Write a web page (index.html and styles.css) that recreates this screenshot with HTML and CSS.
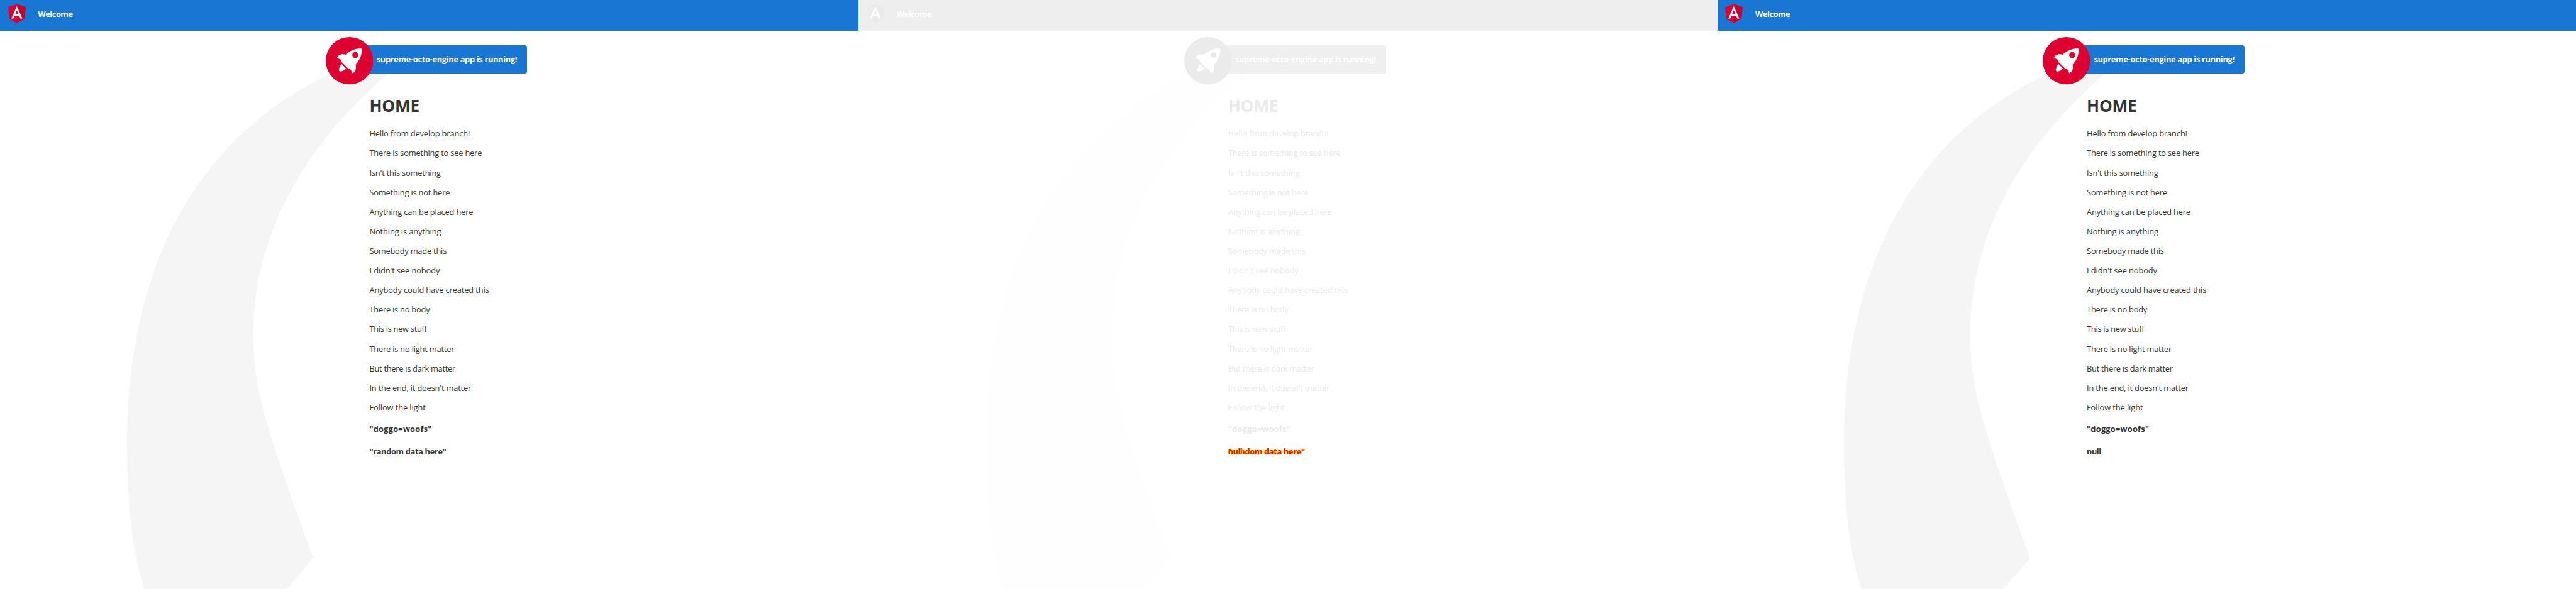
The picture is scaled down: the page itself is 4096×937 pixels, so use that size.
FILE: index.html
```html
<!DOCTYPE html>
<html lang="en">
<head>
<meta charset="utf-8">
<title>Welcome</title>
<link rel="stylesheet" href="styles.css">
</head>
<body>
<svg class="defs" aria-hidden="true">
  <symbol id="logo" viewBox="0 0 250 250">
    <polygon class="shield" points="125,30 31.9,63.2 46.1,186.3 125,230 203.9,186.3 218.1,63.2"/>
    <polygon class="shade" points="125,30 125,230 203.9,186.3 218.1,63.2"/>
    <path class="mark" d="M125,52.1L66.8,182.6h21.7l11.7-29.2h49.4l11.7,29.2h21.7L125,52.1z M142,135.4H108l17-40.9L142,135.4z"/>
  </symbol>
  <symbol id="rocket" viewBox="0 0 101.678 101.678">
    <circle class="disc" cx="50.839" cy="50.839" r="50.839"/>
    <g transform="translate(24.185 24.185)" fill="#fff">
      <path d="M3.4,42.615a3.084,3.084,0,0,0,3.553,3.553,21.419,21.419,0,0,0,12.215-6.107L9.511,30.4A21.419,21.419,0,0,0,3.4,42.615Z" transform="translate(0.371 3.363)"/>
      <path d="M53.3,3.221A3.09,3.09,0,0,0,50.081,0,48.227,48.227,0,0,0,18.322,13.437c-6-1.666-14.991-1.221-18.322,7.218A33.892,33.892,0,0,1,9.439,25.1l-.333.666a3.013,3.013,0,0,0,.555,3.553L23.985,43.641a2.9,2.9,0,0,0,3.553.555l.666-.333A33.892,33.892,0,0,1,32.647,53.3c8.55-3.664,8.884-12.326,7.218-18.322A48.227,48.227,0,0,0,53.3,3.221ZM34.424,9.772a6.439,6.439,0,1,1,9.106,9.106,6.368,6.368,0,0,1-9.106,0A6.467,6.467,0,0,1,34.424,9.772Z"/>
    </g>
  </symbol>
  <symbol id="smoke" viewBox="0 0 516.119 1083.632">
    <path class="trail" d="M644.6,141S143.02,215.537,147.049,870.207s342.774,201.755,342.774,201.755S404.659,847.213,388.815,762.2c-27.116-145.51-11.551-384.124,271.9-609.1C671.15,139.365,644.6,141,644.6,141Z" transform="translate(-147.032 -140.939)"/>
  </symbol>
</svg>
<div class="strip">
  <section class="shot">
    <header class="toolbar"><svg class="logo"><use href="#logo"/></svg><span class="title">Welcome</span></header>
    <svg class="smoke"><use href="#smoke"/></svg>
    <main class="content">
      <div class="card"><svg class="rocket"><use href="#rocket"/></svg><span class="running">supreme-octo-engine app is running!</span></div>
      <h1>HOME</h1>
      <div class="lines">
        <p>Hello from develop branch!</p><p>There is something to see here</p><p>Isn't this something</p><p>Something is not here</p><p>Anything can be placed here</p><p>Nothing is anything</p><p>Somebody made this</p><p>I didn't see nobody</p><p>Anybody could have created this</p><p>There is no body</p><p>This is new stuff</p><p>There is no light matter</p><p>But there is dark matter</p><p>In the end, it doesn't matter</p><p>Follow the light</p>
      </div>
      <h3 class="doggo">"doggo=woofs"</h3>
      <h3 class="random">"random data here"</h3>
    </main>
  </section>
  <section class="shot faded">
    <header class="toolbar"><svg class="logo"><use href="#logo"/></svg><span class="title">Welcome</span></header>
    <svg class="smoke"><use href="#smoke"/></svg>
    <main class="content">
      <div class="card"><svg class="rocket"><use href="#rocket"/></svg><span class="running">supreme-octo-engine app is running!</span></div>
      <h1>HOME</h1>
      <div class="lines">
        <p>Hello from develop branch!</p><p>There is something to see here</p><p>Isn't this something</p><p>Something is not here</p><p>Anything can be placed here</p><p>Nothing is anything</p><p>Somebody made this</p><p>I didn't see nobody</p><p>Anybody could have created this</p><p>There is no body</p><p>This is new stuff</p><p>There is no light matter</p><p>But there is dark matter</p><p>In the end, it doesn't matter</p><p>Follow the light</p>
      </div>
      <h3 class="doggo">"doggo=woofs"</h3>
      <h3 class="random changed">"random data here"<span class="null over">null</span></h3>
    </main>
  </section>
  <section class="shot">
    <header class="toolbar"><svg class="logo"><use href="#logo"/></svg><span class="title">Welcome</span></header>
    <svg class="smoke"><use href="#smoke"/></svg>
    <main class="content">
      <div class="card"><svg class="rocket"><use href="#rocket"/></svg><span class="running">supreme-octo-engine app is running!</span></div>
      <h1>HOME</h1>
      <div class="lines">
        <p>Hello from develop branch!</p><p>There is something to see here</p><p>Isn't this something</p><p>Something is not here</p><p>Anything can be placed here</p><p>Nothing is anything</p><p>Somebody made this</p><p>I didn't see nobody</p><p>Anybody could have created this</p><p>There is no body</p><p>This is new stuff</p><p>There is no light matter</p><p>But there is dark matter</p><p>In the end, it doesn't matter</p><p>Follow the light</p>
      </div>
      <h3 class="doggo">"doggo=woofs"</h3>
      <h3 class="null">null</h3>
    </main>
  </section>
</div>
</body>
</html>
```
FILE: styles.css
```css
body {
  margin: 0;
  overflow: hidden;
  background: #fff;
}
.defs { position: absolute; width: 0; height: 0; }

.strip {
  zoom: 0.94291;
  display: flex;
  width: 4344px;
  height: 994px;
  overflow: hidden;
  font: 13.6px/19px "Open Sans", "Noto Sans", sans-serif;
}

.shot {
  --bar: #1976d2;
  --card: #1976d2;
  --red: #dd0031;
  --red-dark: #c3002f;
  --text: #333;
  --trail: #f5f5f5;
  --on-bar: #fff;
  position: relative;
  isolation: isolate;
  flex: 0 0 1448px;
  height: 994px;
  overflow: hidden;
  color: var(--text);
}
.faded {
  --bar: #eee;
  --card: #efefef;
  --red: #ebebeb;
  --red-dark: #eaeaea;
  --text: #eaeaea;
  --trail: #fefefe;
}

.shield, .disc { fill: var(--red); }
.shade { fill: var(--red-dark); }
.mark { fill: #fff; }
.trail { fill: var(--trail); }

.toolbar {
  display: flex;
  align-items: center;
  box-sizing: border-box;
  height: 52px;
  padding: 0 8px 7px;
  gap: 16px;
  background: var(--bar);
  color: var(--on-bar);
  font-weight: 700;
}
.logo { width: 40px; height: 40px; }
.title { padding-top: 3px; letter-spacing: -0.5px; }

.smoke {
  position: absolute;
  z-index: -1;
  left: 214px;
  top: 88px;
  width: 472.8px;
  height: 992.6px;
}

.content { padding: 24px 0 0 623px; }
.card {
  display: flex;
  align-items: center;
  box-sizing: border-box;
  width: 340px;
  height: 48px;
  margin-left: -74px;
  border-radius: 4px;
  background: linear-gradient(to right, transparent 40px, var(--card) 40px);
  color: #fff;
  font-weight: 700;
}
.rocket {
  flex: none;
  width: 80px;
  height: 80px;
  margin: 6px 6px 0 0;
}
.running { padding-top: 1px; letter-spacing: -0.33px; white-space: nowrap; }

h1 {
  margin: 36.4px 0 18.3px;
  font: 700 27.8px/38px "Open Sans", sans-serif;
  letter-spacing: -0.2px;
}
p { margin: 0 0 14px; letter-spacing: -0.17px; white-space: nowrap; }
p:nth-child(1) { letter-spacing: -0.12px; }
p:nth-child(2) { letter-spacing: -0.19px; }
p:nth-child(6) { letter-spacing: -0.1px; }
p:nth-child(7) { letter-spacing: -0.2px; }
p:nth-child(8) { letter-spacing: -0.1px; }
p:nth-child(9) { letter-spacing: -0.13px; }
p:nth-child(10) { letter-spacing: -0.22px; }
p:nth-child(11) { letter-spacing: -0.28px; }
p:nth-child(12) { letter-spacing: -0.19px; }
p:nth-child(13) { letter-spacing: -0.28px; }
p:nth-child(15) { letter-spacing: -0.08px; }

.lines { margin-bottom: 17.5px; }
.lines p:last-child { margin-bottom: 0; }

h3 { margin: 0 0 19px; font-size: 13.6px; line-height: 19px; font-weight: 700; }
.doggo { letter-spacing: 0.25px; }
.random { letter-spacing: -0.35px; }
.null { letter-spacing: -0.6px; }

.changed {
  position: relative;
  color: #f00;
  text-shadow: -1px 0 #ff0, 1px 0 #ff0;
}
.over { position: absolute; left: 0; top: 0; }
```
